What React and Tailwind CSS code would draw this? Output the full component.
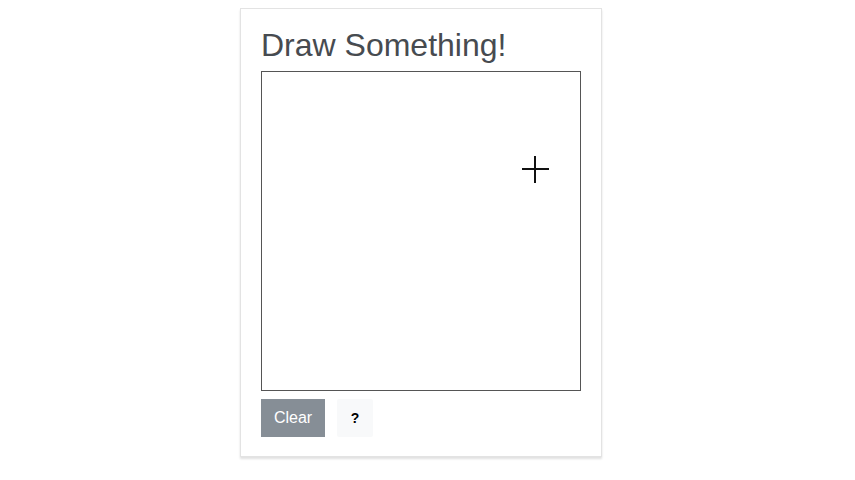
export default function App() {
  return (
    <div className="min-h-[480px] bg-white pt-[8px] font-['Liberation_Sans',Arial,sans-serif]">
      <div className="ml-[240px] w-[362px] border border-[#e3e3e3] bg-white px-[20px] pt-[17px] pb-[19px] shadow-[0_2px_2px_rgba(0,0,0,0.12)]">
        <h1 className="text-[32px] leading-[1.2] text-[#474b50]">Draw Something!</h1>
        <div className="relative mt-[7px] h-[320px] w-[320px] border border-[#555] bg-white">
          {/* crosshair cursor over the canvas */}
          <svg className="absolute left-[260px] top-[84px]" width="27" height="27" viewBox="0 0 27 27">
            <path d="M0 13h27M13 0v27" stroke="#111" strokeWidth="2" />
          </svg>
        </div>
        <div className="mt-[8px] flex gap-[12px]">
          <button className="h-[38px] w-[64px] bg-[#868e96] text-[16px] text-white">Clear</button>
          <button className="h-[38px] w-[36px] rounded-[2px] bg-[#f8f9fa] text-[14px] font-bold text-black">?</button>
        </div>
      </div>
    </div>
  );
}
